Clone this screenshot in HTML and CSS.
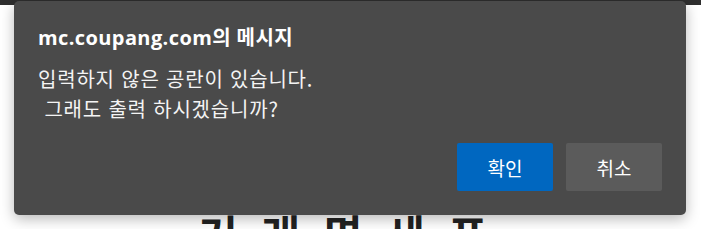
FILE: index.html
```html
<!DOCTYPE html>
<html lang="ko">
<head>
<meta charset="utf-8">
<link rel="stylesheet" href="styles.css">
</head>
<body>
<div class="topbar"></div>
<div class="page">
  <div class="rule-grey"></div>
  <div class="rule-black"></div>
  <h1 class="doc-title">거 래 명 세 표</h1>
</div>
<div class="dialog">
  <div class="dialog-title">mc.coupang.com의 메시지</div>
  <div class="dialog-msg">입력하지 않은 공란이 있습니다.<br>&nbsp;그래도 출력 하시겠습니까?</div>
  <div class="dialog-actions">
    <button class="btn btn-ok">확인</button>
    <button class="btn btn-cancel">취소</button>
  </div>
</div>
</body>
</html>
```
FILE: styles.css
```css
html, body {
  margin: 0;
  padding: 0;
  background: #ffffff;
  width: 701px;
  height: 229px;
  overflow: hidden;
  font-family: "Noto Sans", "Noto Sans CJK KR", sans-serif;
}
.topbar {
  height: 5px;
  background: #2e2e2e;
}
.page {
  display: flex;
  flex-direction: column;
  height: 224px;
  overflow: hidden;
}
.rule-grey {
  margin-top: 72px;
  height: 1px;
  background: #c8c8c8;
}
.rule-black {
  margin-top: 119px;
  height: 1px;
  background: #111;
}
.doc-title {
  margin: 16px 0 0 199px;
  font-family: "Noto Sans CJK KR", sans-serif;
  font-size: 42px;
  font-weight: 700;
  color: #222;
  line-height: 1;
  letter-spacing: 6px;
}
.dialog {
  position: absolute;
  left: 14px;
  top: 1px;
  width: 672px;
  height: 214px;
  box-sizing: border-box;
  background: #4a4a4a;
  border-radius: 5px;
  box-shadow: 0 4px 14px rgba(0,0,0,0.28);
  padding: 23px 24px 0 24px;
  color: #ffffff;
}
.dialog-title {
  font-family: "Open Sans", "Noto Sans CJK KR", sans-serif;
  font-size: 20px;
  font-weight: 700;
  line-height: 28px;
  letter-spacing: 0.4px;
}
.dialog-msg {
  margin-top: 12px;
  font-family: "Noto Sans CJK KR", sans-serif;
  font-size: 20px;
  line-height: 30px;
  letter-spacing: 0.8px;
  color: #f4f4f4;
}
.dialog-actions {
  display: flex;
  justify-content: flex-end;
  gap: 13px;
  margin-top: 19px;
}
.btn {
  width: 96px;
  height: 48px;
  border: none;
  border-radius: 2px;
  font-family: "Noto Sans CJK KR", sans-serif;
  font-size: 19px;
  color: #ffffff;
}
.btn-ok {
  background: #0067c0;
}
.btn-cancel {
  background: #5b5b5b;
}
```
